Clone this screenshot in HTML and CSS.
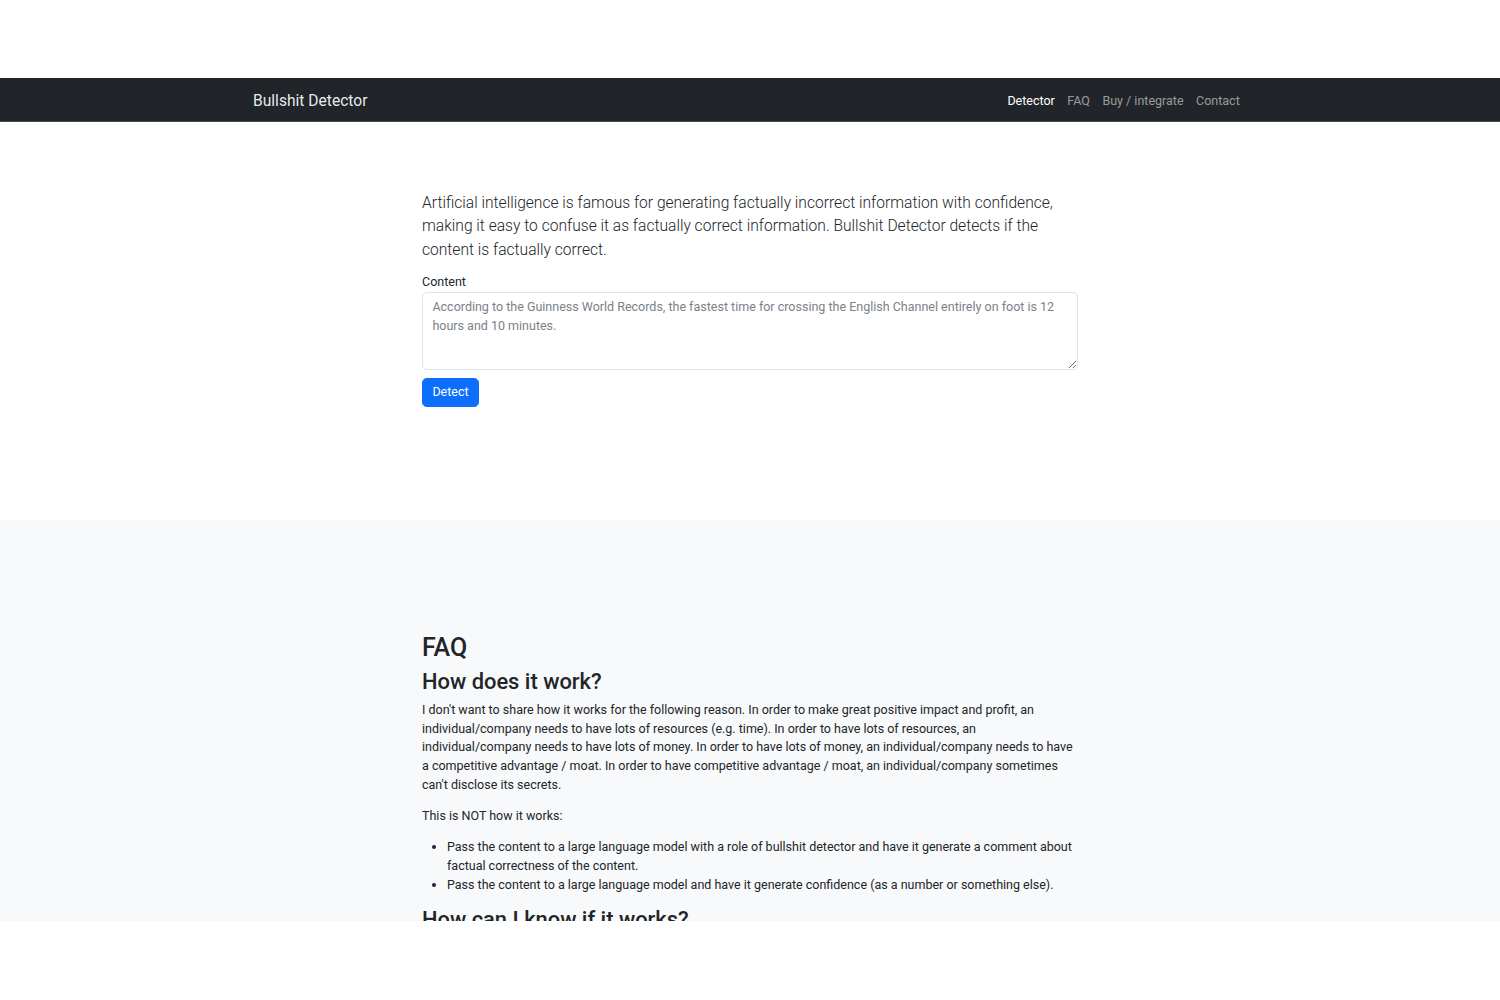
FILE: index.html
```html
<!DOCTYPE html>
<html lang="en">
<head>
<meta charset="utf-8">
<title>Bullshit Detector</title>
<link rel="stylesheet" href="styles.css">
</head>
<body>
<div class="top-gap"></div>
<div class="frame">
  <nav class="navbar">
    <div class="nav-inner">
      <a class="brand" href="#">Bullshit Detector</a>
      <ul class="nav-links">
        <li><a class="active" href="#">Detector</a></li>
        <li><a href="#">FAQ</a></li>
        <li><a href="#">Buy / integrate</a></li>
        <li><a href="#">Contact</a></li>
      </ul>
    </div>
  </nav>
  <section class="detector">
    <div class="col">
      <p class="lead">Artificial intelligence is famous for generating factually incorrect information with confidence, making it easy to confuse it as factually correct information. Bullshit Detector detects if the content is factually correct.</p>
      <label class="label" for="content">Content</label>
      <textarea id="content" class="input" placeholder="According to the Guinness World Records, the fastest time for crossing the English Channel entirely on foot is 12 hours and 10 minutes."></textarea>
      <button class="btn">Detect</button>
    </div>
  </section>
  <section class="faq">
    <div class="col">
      <h2>FAQ</h2>
      <h3>How does it work?</h3>
      <p>I don't want to share how it works for the following reason. In order to make great positive impact and profit, an individual/company needs to have lots of resources (e.g. time). In order to have lots of resources, an individual/company needs to have lots of money. In order to have lots of money, an individual/company needs to have a competitive advantage / moat. In order to have competitive advantage / moat, an individual/company sometimes can't disclose its secrets.</p>
      <p>This is NOT how it works:</p>
      <ul>
        <li>Pass the content to a large language model with a role of bullshit detector and have it generate a comment about factual correctness of the content.</li>
        <li>Pass the content to a large language model and have it generate confidence (as a number or something else).</li>
      </ul>
      <h3>How can I know if it works?</h3>
      <p>You can try it yourself with content whose factual correctness you already know.</p>
    </div>
  </section>
</div>
</body>
</html>
```
FILE: styles.css
```css
* { box-sizing: border-box; }
html, body { margin: 0; padding: 0; background: #fff; }
body {
  font-family: Roboto, "Liberation Sans", sans-serif;
  font-size: 12.5px;
  line-height: 18.75px;
  color: #212529;
}
.top-gap { height: 78px; }
.frame {
  height: 843px;
  overflow: hidden;
}
.navbar {
  height: 44px;
  background: #212529;
  border-bottom: 1px solid #4a4d51;
}
.nav-inner {
  width: 1000px;
  margin: 0 auto;
  padding: 3px 4px 0 3px;
  height: 43px;
  display: flex;
  align-items: center;
  justify-content: space-between;
}
.brand {
  color: rgba(255,255,255,.92);
  text-decoration: none;
  font-size: 15.6px;
  line-height: 23px;
}
.nav-links {
  list-style: none;
  margin: 0;
  padding: 0;
  display: flex;
}
.nav-links a {
  display: block;
  padding: 0 6.25px;
  color: rgba(255,255,255,.55);
  text-decoration: none;
  font-size: 12.5px;
}
.nav-links a.active { color: #fff; }
.col {
  width: 656px;
  margin: 0 auto;
}
.detector {
  padding: 70px 0 0;
  height: 398px;
}
.lead {
  margin: 0 0 11px;
  font-size: 15.6px;
  line-height: 23.4px;
  font-weight: 300;
}
.label {
  display: block;
  margin-bottom: 0;
}
.input {
  display: block;
  width: 100%;
  height: 78px;
  padding: 5px 9.4px;
  border: 1px solid #dee2e6;
  border-radius: 4.7px;
  font-family: inherit;
  font-size: 12.5px;
  line-height: 18.75px;
  color: #212529;
  background: #fff;
  resize: vertical;
  margin-bottom: 8px;
}
.input::placeholder { color: #7b8188; }
.btn {
  display: block;
  height: 29px;
  padding: 0 9.4px;
  border: 1px solid #0d6efd;
  border-radius: 4.7px;
  background: #0d6efd;
  color: #fff;
  font-family: inherit;
  font-size: 12.5px;
  line-height: 18.75px;
}
.faq {
  background: #f8f9fa;
  padding: 113px 0 40px;
}
h2 {
  margin: 0 0 6.25px;
  font-size: 25px;
  line-height: 30px;
  font-weight: 500;
}
h3 {
  margin: 0 0 5.25px;
  font-size: 21.9px;
  line-height: 26.25px;
  font-weight: 500;
}
.faq p { margin: 0 0 12.5px; }
.faq ul {
  margin: 0 0 12.5px;
  padding-left: 25px;
}
```
